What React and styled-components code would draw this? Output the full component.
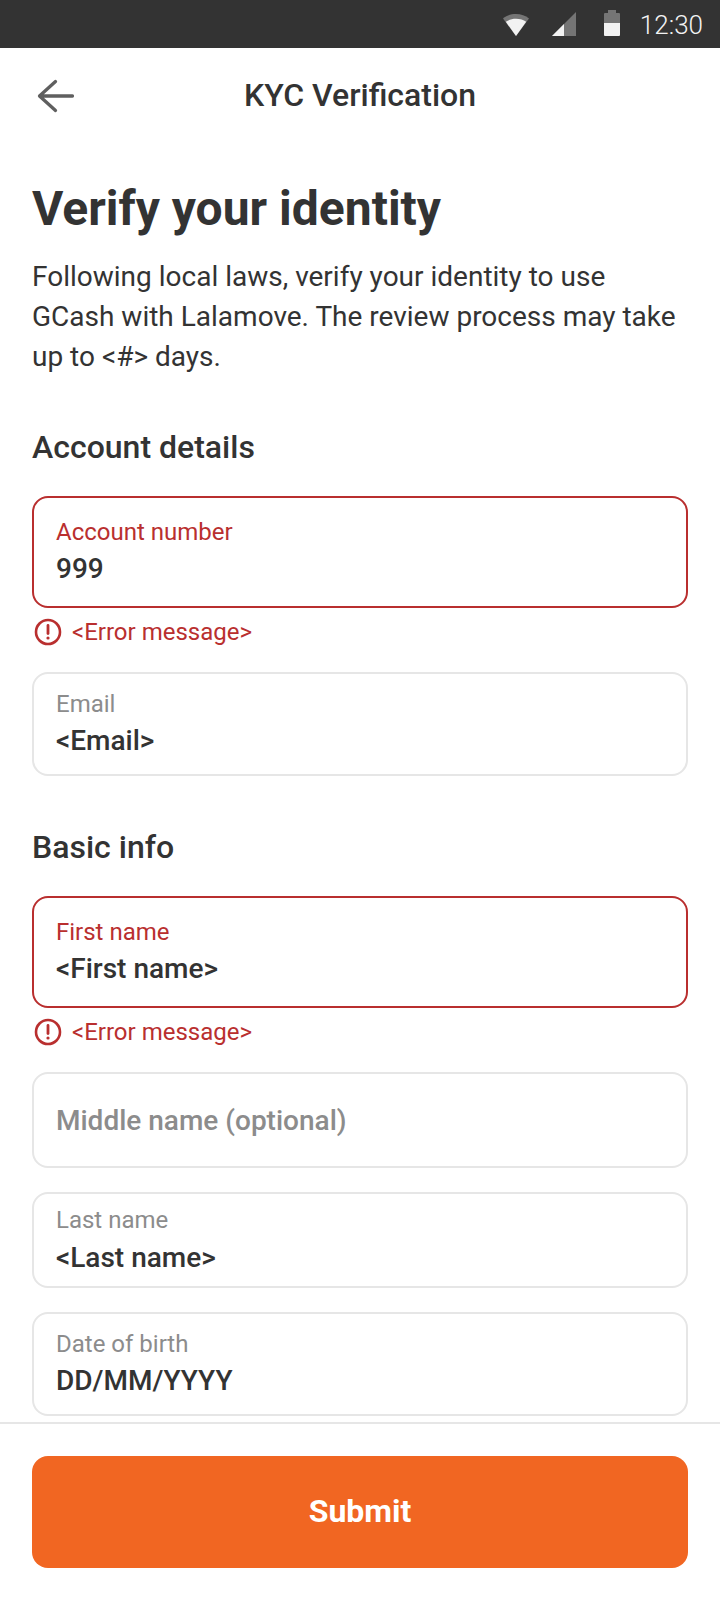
import React from "react";
import styled, { createGlobalStyle } from "styled-components";

const Global = createGlobalStyle`
  html, body { margin: 0; padding: 0; background: #fff; }
  body { font-family: Roboto, "Noto Sans", sans-serif; color: #303030; }
`;
const Page = styled.div`
  width: 720px; height: 1600px; display: flex; flex-direction: column; overflow: hidden; background: #fff;
`;
const StatusBar = styled.div`
  height: 48px; flex: none; background: #333; display: flex; align-items: center; justify-content: flex-end;
  padding-right: 17px; box-sizing: border-box;
`;
const StatusIcon = styled.svg`
  display: block; flex: none; margin-right: ${p => p.$gap}px; margin-bottom: ${p => p.$lift || 0}px;
`;
const Clock = styled.span`
  font-size: 26px; font-weight: 300; color: #f2f2f2; line-height: 48px; padding-top: 2px;
`;
const TopBar = styled.header`
  height: 94px; flex: none; position: relative; display: flex; align-items: center; justify-content: center;
`;
const BackButton = styled.svg`
  position: absolute; left: 36px; top: 31px; display: block;
`;
const TopTitle = styled.h1`
  margin: 0; font-size: 32px; font-weight: 500; line-height: 36px; color: #333;
`;
const Content = styled.main`
  flex: 1; min-height: 0; overflow: hidden; padding: 0 32px;
`;
const Heading = styled.h2`
  margin: 39px 0 0; font-size: 48px; line-height: 56px; font-weight: 700; color: #333;
`;
const Intro = styled.p`
  margin: 20px 0 0; font-size: 28px; line-height: 40px; font-weight: 400; color: #333;
`;
const SectionTitle = styled.h3`
  margin: ${p => p.$top}px 0 0; font-size: 32px; line-height: 40px; font-weight: 500; color: #333;
`;
const Field = styled.div`
  box-sizing: border-box; height: ${p => p.$h}px; margin-top: ${p => p.$top}px; border-radius: 16px;
  border: 2px solid ${p => (p.$error ? "#b92f2f" : "#e6e6e6")};
  padding: ${p => p.$pt}px 22px 0;
`;
const FieldLabel = styled.div`
  font-size: 24px; line-height: 32px; color: ${p => (p.$error ? "#b92f2f" : "#8c8c8c")};
`;
const FieldValue = styled.div`
  font-size: 28px; line-height: 36px; font-weight: 500; color: #333; margin-top: ${p => p.$gap}px;
`;
const Placeholder = styled.div`
  font-size: 28px; line-height: 36px; font-weight: 500; color: #8c8c8c;
`;
const ErrorRow = styled.div`
  display: flex; align-items: center; gap: 10px; margin-top: 9px; height: 30px; padding-left: 2px;
  font-size: 24px; color: #b92f2f;
`;
const Footer = styled.footer`
  flex: none; height: 178px; box-sizing: border-box; border-top: 2px solid #e6e6e6; padding: 32px 32px 0;
`;
const SubmitButton = styled.button`
  display: block; width: 100%; height: 112px; border: 0; border-radius: 16px; background: #f16622; color: #fff;
  font-family: inherit; font-size: 32px; font-weight: 700; padding: 0 0 2px;
`;

const ErrorIcon = () => (
  <svg width="28" height="28" viewBox="0 0 28 28" fill="none">
    <circle cx="14" cy="14" r="12" stroke="#b92f2f" strokeWidth="2.600" />
    <path d="M14 7.500v8" stroke="#b92f2f" strokeWidth="2.800" strokeLinecap="round" />
    <circle cx="14" cy="20" r="1.600" fill="#b92f2f" />
  </svg>
);

const ErrorMessage = () => (
  <ErrorRow>
    <ErrorIcon />
    <span>&lt;Error message&gt;</span>
  </ErrorRow>
);

export default function App() {
  return (
    <Page>
      <Global />
      <StatusBar>
        <StatusIcon $gap={22} width="28" height="24" viewBox="0 0 28 24">
          <path d="M1 6.500C4.500 3.500 9 2 14 2s9.500 1.500 13 4.500L14 24z" fill="#757575" />
          <path d="M3.800 9.800C6.500 7.800 10 6.800 14 6.800s7.500 1 10.200 3L14 24z" fill="#f2f2f2" />
        </StatusIcon>
        <StatusIcon $gap={28} width="24" height="24" viewBox="0 0 24 24">
          <path d="M0 24L24 0v24z" fill="#757575" />
          <path d="M0 24L12 12v12z" fill="#f2f2f2" />
        </StatusIcon>
        <StatusIcon $gap={20} $lift={2} width="16" height="26" viewBox="0 0 16 26">
          <path d="M1 3h3V0h8v3h3a1 1 0 0 1 1 1v9H0V4a1 1 0 0 1 1-1z" fill="#757575" />
          <path d="M0 13h16v12a1 1 0 0 1-1 1H1a1 1 0 0 1-1-1z" fill="#f2f2f2" />
        </StatusIcon>
        <Clock>12:30</Clock>
      </StatusBar>
      <TopBar>
        <BackButton width="40" height="34" viewBox="0 0 40 34" fill="none">
          <path d="M36.500 17H3.500M19.500 2.500L3.500 17 19.500 31.500" stroke="#5f5f5f" strokeWidth="3.300" strokeLinecap="round" strokeLinejoin="round" />
        </BackButton>
        <TopTitle>KYC Verification</TopTitle>
      </TopBar>
      <Content>
        <Heading>Verify your identity</Heading>
        <Intro>
          Following local laws, verify your identity to use GCash with Lalamove. The review process may take up to &lt;#&gt; days.
        </Intro>
        <SectionTitle $top={50}>Account details</SectionTitle>
        <Field $error $h={112} $top={29} $pt={18}>
          <FieldLabel $error>Account number</FieldLabel>
          <FieldValue $gap={3}>999</FieldValue>
        </Field>
        <ErrorMessage />
        <Field $h={104} $top={25} $pt={14}>
          <FieldLabel>Email</FieldLabel>
          <FieldValue $gap={3}>&lt;Email&gt;</FieldValue>
        </Field>
        <SectionTitle $top={51}>Basic info</SectionTitle>
        <Field $error $h={112} $top={29} $pt={18}>
          <FieldLabel $error>First name</FieldLabel>
          <FieldValue $gap={3}>&lt;First name&gt;</FieldValue>
        </Field>
        <ErrorMessage />
        <Field $h={96} $top={25} $pt={29}>
          <Placeholder>Middle name (optional)</Placeholder>
        </Field>
        <Field $h={96} $top={24} $pt={10}>
          <FieldLabel>Last name</FieldLabel>
          <FieldValue $gap={4}>&lt;Last name&gt;</FieldValue>
        </Field>
        <Field $h={104} $top={24} $pt={14}>
          <FieldLabel>Date of birth</FieldLabel>
          <FieldValue $gap={3}>DD/MM/YYYY</FieldValue>
        </Field>
      </Content>
      <Footer>
        <SubmitButton>Submit</SubmitButton>
      </Footer>
    </Page>
  );
}
